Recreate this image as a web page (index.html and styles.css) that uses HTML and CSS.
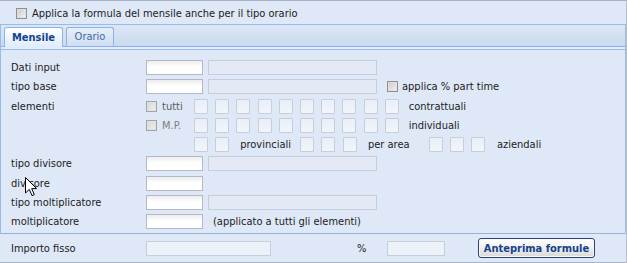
FILE: index.html
```html
<!DOCTYPE html>
<html lang="it">
<head>
  <meta charset="UTF-8" />
  <title>Formule</title>
  <link rel="stylesheet" href="styles.css">
</head>
<body>
  <div class="frame">
    <div class="topbar">
      <span class="chk"></span>
      <span class="txt">Applica la formula del mensile anche per il tipo orario</span>
    </div>

    <div class="panel">
      <div class="strip">
        <div class="tab active">Mensile</div>
        <div class="tab">Orario</div>
      </div>
      <div class="spacer"></div>

      <div class="body">
        <div class="row">
          <div class="lbl">Dati input</div>
          <div class="fld"></div>
          <div class="fld wide dis"></div>
        </div>
        <div class="row">
          <div class="lbl">tipo base</div>
          <div class="fld"></div>
          <div class="fld wide dis"></div>
          <span class="chk part"></span>
          <span class="txt">applica % part time</span>
        </div>
        <div class="row">
          <div class="lbl">elementi</div>
          <div class="cell"><span class="chk dim"></span><span class="txt t1">tutti</span></div>
          <div class="grp">
            <span class="box"></span><span class="box"></span><span class="box"></span><span class="box"></span><span class="box"></span>
            <span class="box"></span><span class="box"></span><span class="box"></span><span class="box"></span><span class="box"></span>
          </div>
          <span class="txt after">contrattuali</span>
        </div>
        <div class="row">
          <div class="lbl"></div>
          <div class="cell"><span class="chk dim"></span><span class="txt t2">M.P.</span></div>
          <div class="grp">
            <span class="box"></span><span class="box"></span><span class="box"></span><span class="box"></span><span class="box"></span>
            <span class="box"></span><span class="box"></span><span class="box"></span><span class="box"></span><span class="box"></span>
          </div>
          <span class="txt after">individuali</span>
        </div>
        <div class="row">
          <div class="lbl"></div>
          <div class="cell"></div>
          <div class="grp"><span class="box"></span><span class="box"></span></div>
          <span class="txt prov">provinciali</span>
          <div class="grp"><span class="box"></span><span class="box"></span><span class="box"></span></div>
          <span class="txt area">per area</span>
          <div class="grp"><span class="box"></span><span class="box"></span><span class="box"></span></div>
          <span class="txt azi">aziendali</span>
        </div>
        <div class="row">
          <div class="lbl">tipo divisore</div>
          <div class="fld"></div>
          <div class="fld wide dis"></div>
        </div>
        <div class="row">
          <div class="lbl">divisore</div>
          <div class="fld"></div>
        </div>
        <div class="row">
          <div class="lbl">tipo moltiplicatore</div>
          <div class="fld"></div>
          <div class="fld wide dis"></div>
        </div>
        <div class="row">
          <div class="lbl">moltiplicatore</div>
          <div class="fld"></div>
          <span class="txt note">(applicato a tutti gli elementi)</span>
        </div>
      </div>
    </div>

    <div class="toolbar">
      <div class="lbl">Importo fisso</div>
      <div class="fld amount dis"></div>
      <span class="pct">%</span>
      <div class="fld perc dis"></div>
      <button class="btn">Anteprima formule</button>
    </div>

    <!-- puntatore del mouse presente nello screenshot -->
    <svg class="cursor" width="13" height="20" viewBox="0 0 13 20">
      <path d="M0.5 0.5 L0.5 16 L4.3 12.4 L7 18.6 L9.3 17.6 L6.7 11.6 L11.6 11.6 Z" fill="#fff" stroke="#000" stroke-width="1" stroke-linejoin="miter"/>
    </svg>
  </div>
</body>
</html>
```

FILE: styles.css
```css
body {
  margin: 0;
  font-family: "DejaVu Sans Condensed", "Liberation Sans", Arial, sans-serif;
  font-size: 11px;
  color: #1c1c24;
}

.frame {
  position: relative;
  width: 627px;
  height: 263px;
  box-sizing: border-box;
  border-top: 1px solid #a7b1c2;
  border-right: 1px solid #b7c0ce;
  background: #dfe8f6;
  overflow: hidden;
}

.topbar {
  height: 23px;
  box-sizing: border-box;
  padding: 2px 0 0 16px;
  display: flex;
  align-items: center;
}

.topbar .chk {
  margin-right: 5px;
}

/* checkbox */
.chk {
  display: inline-block;
  width: 11px;
  height: 11px;
  box-sizing: border-box;
  border: 1px solid #8e8f8f;
  background: linear-gradient(135deg, #c9c9c9, #f4f4f4);
  box-shadow: inset 0 0 0 1px #e0e0e0;
  flex: 0 0 auto;
}

.chk.dim {
  border-color: #a2a4a8;
  background: linear-gradient(135deg, #d4d5d7, #f2f2f2);
}

.chk.part {
  margin-left: 10px;
  margin-right: 4px;
}

/* tabs */
.panel {
  border-left: 1px solid #99bbe8;
  border-right: 1px solid #99bbe8;
}

.strip {
  height: 23px;
  box-sizing: border-box;
  border-top: 1px solid #99bbe8;
  border-bottom: 1px solid #8db2e3;
  background: linear-gradient(#dce7f5, #cbdaee);
  display: flex;
  align-items: flex-end;
  padding-left: 3px;
  gap: 3px;
}

.tab {
  height: 19px;
  box-sizing: border-box;
  width: 48px;
  border: 1px solid #8db2e3;
  border-bottom: none;
  border-radius: 3px 3px 0 0;
  background: linear-gradient(#e6eef9, #cfdef2);
  color: #416aa3;
  text-align: center;
  line-height: 18px;
}

.tab.active {
  width: 59px;
  height: 20px;
  margin-bottom: -1px;
  background: linear-gradient(#ffffff, #deecfd);
  color: #15428b;
  font-weight: bold;
  line-height: 19px;
}

.spacer {
  height: 2px;
  background: #e2ecfa;
  border-bottom: 1px solid #99bbe8;
}

/* form */
.body {
  border-bottom: 1px solid #98b2d6;
  padding: 10px 0 0 10px;
  box-sizing: border-box;
  height: 184px;
  display: flex;
  flex-direction: column;
  gap: 4.3px;
}

.row {
  height: 15px;
  display: flex;
  align-items: center;
}

.lbl {
  width: 135px;
  flex: 0 0 auto;
}

.fld {
  width: 57px;
  height: 15px;
  box-sizing: border-box;
  border: 1px solid #b5b8c8;
  background: linear-gradient(#ececec, #ffffff 45%);
  flex: 0 0 auto;
}

.fld.wide {
  width: 169px;
  margin-left: 5px;
}

.fld.dis {
  border-color: #c6cedb;
  background: #e3eaf6;
}

.cell {
  width: 48px;
  flex: 0 0 auto;
  display: flex;
  align-items: center;
}

.cell .chk {
  margin-right: 5px;
}

.t1 {
  color: #5c5c5c;
}

.t2 {
  color: #7f7f7f;
}

.grp {
  display: flex;
  gap: 7.2px;
}

.box {
  width: 14px;
  height: 15px;
  box-sizing: border-box;
  border: 1px solid #c7ced9;
  border-radius: 1px;
  background: linear-gradient(#e9eff8, #f1f5fb);
}

.after {
  margin-left: 10px;
}

.prov {
  margin-left: 11px;
  width: 60px;
}

.area {
  margin-left: 11.4px;
  width: 61px;
}

.azi {
  margin-left: 11.6px;
}

.note {
  margin-left: 10px;
}

/* bottom toolbar */
.toolbar {
  height: 29px;
  box-sizing: border-box;
  border-bottom: 1px solid #a9b5c7;
  padding-left: 11px;
  display: flex;
  align-items: center;
}

.fld.amount {
  width: 125px;
  height: 15px;
  background: #edf1f8;
}

.pct {
  margin-left: 86px;
  width: 30px;
}

.fld.perc {
  width: 58px;
  background: #edf1f8;
}

.btn {
  margin-left: 33px;
  width: 117px;
  height: 20px;
  padding: 0;
  border: 1px solid #2a4570;
  border-radius: 3px;
  background: linear-gradient(#ffffff, #f1f1f1 45%, #d9d9d9);
  box-shadow: inset 0 0 0 1px #f8f8f8;
  color: #15428b;
  font-family: "DejaVu Sans Condensed", "Liberation Sans", Arial, sans-serif;
  font-size: 11px;
  font-weight: bold;
}

.cursor {
  position: absolute;
  left: 25px;
  top: 176px;
}
```
